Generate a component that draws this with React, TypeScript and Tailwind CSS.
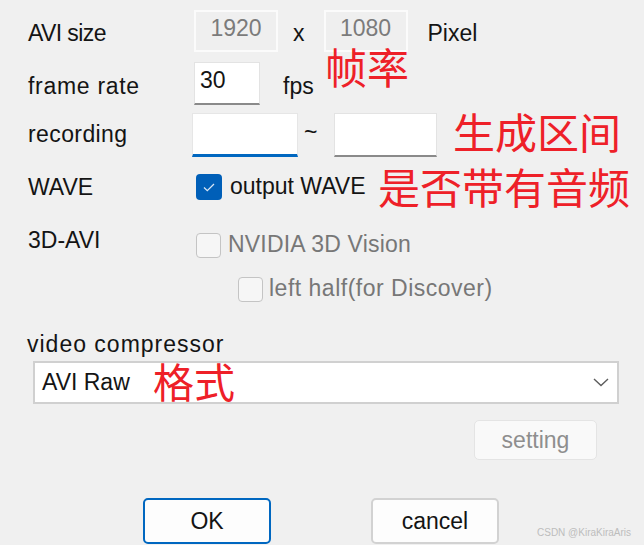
import React from 'react';

const Label = ({ children, className = '' }: { children: React.ReactNode; className?: string }) => (
  <div className={`shrink-0 ${className}`}>{children}</div>
);

const CheckBox = ({ checked = false, className = '' }: { checked?: boolean; className?: string }) =>
  checked ? (
    <div className={`w-[26px] h-[26px] rounded-[4px] bg-[#005fb8] flex items-center justify-center shrink-0 ${className}`}>
      <svg width="12" height="9" viewBox="0 0 12 9" fill="none">
        <path d="M1 4.5 L4.3 7.6 L11 1" stroke="#d8e6f5" strokeWidth="1.3" />
      </svg>
    </div>
  ) : (
    <div className={`w-[25px] h-[25px] rounded-[4px] bg-[#f6f6f6] border-[1.5px] border-[#c4c4c4] shrink-0 ${className}`} />
  );

const App = () => {
  return (
    <div className="w-[644px] h-[545px] bg-[#f0f0f0] relative overflow-hidden font-['Liberation_Sans',Arial,sans-serif] text-[23px] leading-[23px] text-[#141414]">
      <div className="flex flex-col pl-[28px] pt-[10px]">
        {/* AVI size */}
        <div className="flex items-start">
          <Label className="w-[166px] mt-[12px] tracking-[-0.6px]">AVI size</Label>
          <div className="w-[84px] h-[42px] box-border border-2 border-[#fbfbfb] bg-[#efefef] flex justify-center pt-[5px] text-[#7b7b7b]">
            1920
          </div>
          <div className="ml-[15px] mt-[12px]">x</div>
          <div className="ml-[19px] w-[84px] h-[42px] box-border border-2 border-[#fbfbfb] bg-[#efefef] flex justify-center pt-[5px] text-[#7b7b7b]">
            1080
          </div>
          <div className="ml-[20px] mt-[12px]">Pixel</div>
        </div>

        {/* frame rate */}
        <div className="flex items-start mt-[10px]">
          <Label className="w-[166px] mt-[13px] tracking-[0.7px]">frame rate</Label>
          <div className="w-[66px] h-[43px] box-border bg-white border border-[#e3e3e3] border-b-2 border-b-[#8a8a8a] pl-[5px] pt-[6px]">
            30
          </div>
          <div className="ml-[23px] mt-[13px]">fps</div>
        </div>

        {/* recording */}
        <div className="flex items-start mt-[8px]">
          <Label className="w-[164px] mt-[10px] tracking-[0.4px]">recording</Label>
          <div className="w-[106px] h-[44px] box-border bg-white border border-[#e6e6e6] border-b-[3px] border-b-[#0067c0]" />
          <div className="ml-[6px] mt-[8px]">~</div>
          <div className="ml-[17px] w-[103px] h-[44px] box-border bg-white border border-[#e3e3e3] border-b-2 border-b-[#8a8a8a]" />
        </div>

        {/* WAVE */}
        <div className="flex items-start mt-[17px]">
          <Label className="w-[168px] mt-[2px]">WAVE</Label>
          <CheckBox checked />
          <div className="ml-[8px] mt-[1px]">output WAVE</div>
        </div>

        {/* 3D-AVI */}
        <div className="flex items-start mt-[29px]">
          <Label className="w-[168px]">3D-AVI</Label>
          <CheckBox className="mt-[4px]" />
          <div className="ml-[7px] mt-[4px] text-[#777777] tracking-[0.2px]">NVIDIA 3D Vision</div>
        </div>

        <div className="flex items-start mt-[19px] pl-[210px]">
          <CheckBox />
          <div className="ml-[6px] text-[#777777] tracking-[0.5px]">left half(for Discover)</div>
        </div>

        {/* video compressor */}
        <div className="mt-[31px] -ml-[1px] tracking-[1px]">video compressor</div>
        <div className="mt-[5px] ml-[5px] w-[586px] h-[43px] box-border bg-white border-2 border-[#d0d0d0] flex items-center justify-between pl-[7px] pr-[8px]">
          <span>AVI Raw</span>
          <svg width="16" height="9" viewBox="0 0 16 9" fill="none">
            <path d="M1 1 L8 7.5 L15 1" stroke="#5c5c5c" strokeWidth="1.4" />
          </svg>
        </div>

        <div className="mt-[16px] ml-[446px] w-[123px] h-[40px] box-border rounded-[5px] border border-[#e4e4e4] bg-[#f9f9f9] flex items-center justify-center text-[#8e8e8e]">
          setting
        </div>

        <div className="flex mt-[38px] ml-[115px]">
          <button className="w-[128px] h-[46px] box-border rounded-[5px] border-2 border-[#0067c0] bg-[#fdfdfd] flex items-center justify-center">
            OK
          </button>
          <button className="ml-[100px] w-[128px] h-[46px] box-border rounded-[5px] border-2 border-[#d2d2d2] bg-[#fdfdfd] flex items-center justify-center">
            cancel
          </button>
        </div>
      </div>

      {/* red annotations */}
      <div className="absolute left-[325px] top-[49px] text-[42px] leading-[34px] text-[#ee2028] font-['Noto_Sans_CJK_SC',sans-serif]">帧率</div>
      <div className="absolute left-[453px] top-[114px] text-[42px] leading-[34px] text-[#ee2028] font-['Noto_Sans_CJK_SC',sans-serif]">生成区间</div>
      <div className="absolute left-[378px] top-[169px] text-[42px] leading-[34px] text-[#ee2028] font-['Noto_Sans_CJK_SC',sans-serif]">是否带有音频</div>
      <div className="absolute left-[153px] top-[364px] text-[41px] leading-[33px] text-[#ee2028] font-['Noto_Sans_CJK_SC',sans-serif]">格式</div>

      <div className="absolute left-[537px] top-[527px] text-[10px] leading-[12px] text-[#bdbdbd] whitespace-nowrap">
        CSDN @KiraKiraAris
      </div>
    </div>
  );
};

export default App;
